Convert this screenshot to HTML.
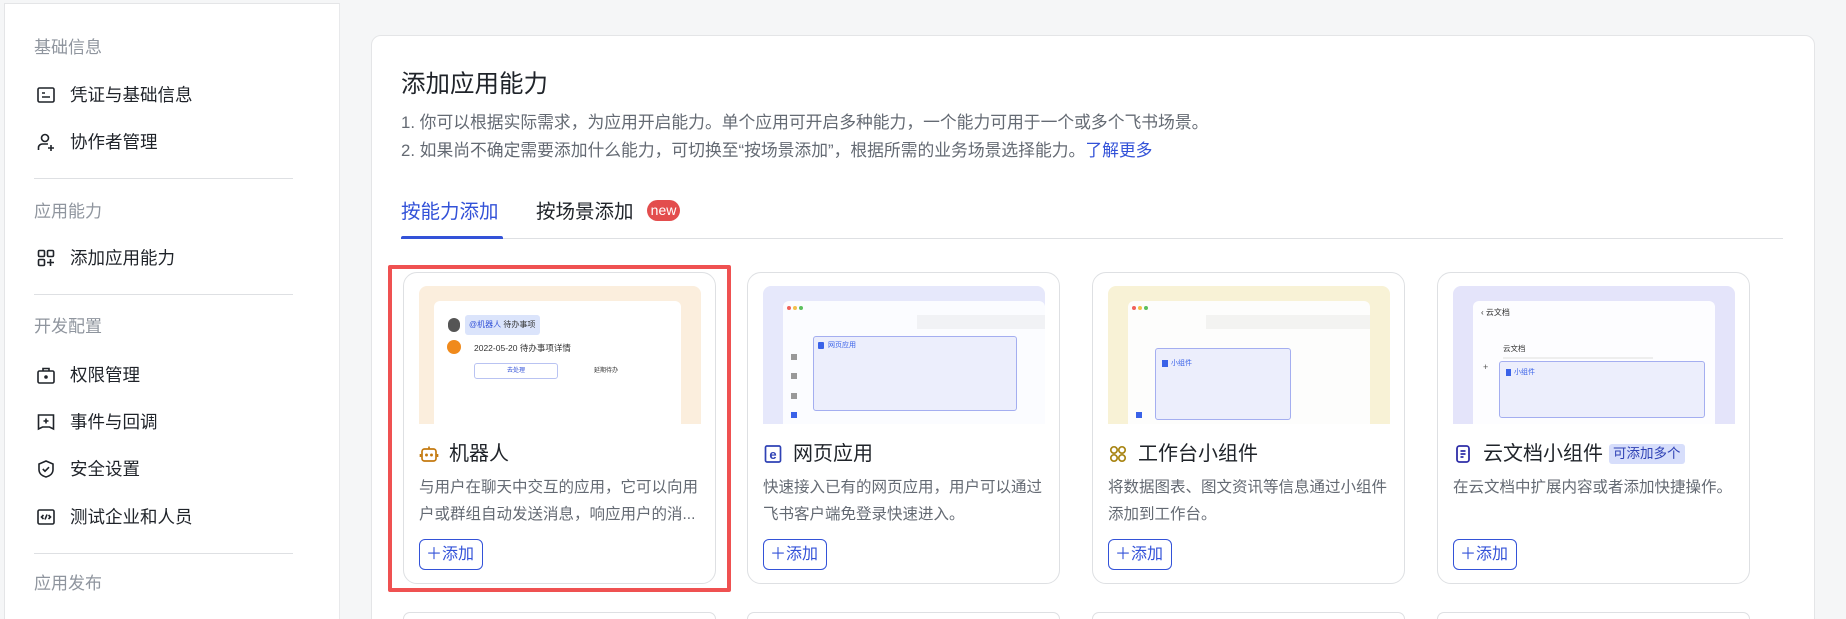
<!DOCTYPE html>
<html style="overflow:hidden;width:1846px;height:619px"><head><meta charset="utf-8">
<style>
*{box-sizing:border-box;margin:0;padding:0}
html,body{overflow:hidden}
body{width:1846px;height:619px;overflow:hidden;background:#f5f6f7;font-family:"Liberation Sans","Noto Sans CJK SC",sans-serif;position:relative;color:#1f2329}
.side{position:absolute;left:4px;top:3px;width:336px;height:616px;background:#fff;border-left:1px solid #e4e5e7;border-top:1px solid #e4e5e7;border-right:1px solid #e8e9eb}
.lab{position:absolute;left:29px;font-size:17px;color:#8f959e;line-height:20px}
.it{position:absolute;left:31px;font-size:17.5px;color:#1f2329;line-height:22px;display:flex;align-items:center}
.it svg{width:20px;height:20px;margin-right:14px}
.hr{position:absolute;left:29px;width:259px;height:1px;background:#dee0e3}
.main{position:absolute;left:371px;top:35px;width:1444px;height:600px;background:#fff;border:1px solid #e4e5e7;border-radius:10px}
.abs{position:absolute}
.card{position:absolute;top:272px;width:313px;height:312px;border:1px solid #dee0e3;border-radius:14px;background:#fff}
.img{position:absolute;left:15px;top:13px;width:282px;height:138px;border-radius:8px 8px 0 0;overflow:hidden}
.ct{position:absolute;left:15px;top:168px;font-size:20px;line-height:26px;display:flex;align-items:center;white-space:nowrap}
.ct svg{width:20px;height:20px;margin-right:10px}
.cd{position:absolute;left:15px;top:201px;width:285px;font-size:15.5px;line-height:27px;color:#646a73}
.btn{position:absolute;left:15px;top:266px;height:31px;border:1px solid #3352d8;border-radius:6px;color:#3352d8;font-size:16px;line-height:29px;padding:0 8px 0 6px;white-space:nowrap}
.win{position:absolute;background:#fff;border-radius:6px 6px 0 0}
</style></head><body>
<div class="side">
<div class="lab" style="top:34px">基础信息</div>
<div class="it" style="top:80px"><svg viewBox="0 0 20 20" fill="none" stroke="#1f2329" stroke-width="1.6"><rect x="2" y="3" width="16" height="14" rx="1.5"/><path d="M6 8h3M6 12h8"/></svg>凭证与基础信息</div>
<div class="it" style="top:127px"><svg viewBox="0 0 20 20" fill="none" stroke="#1f2329" stroke-width="1.6"><circle cx="9" cy="6" r="3.5"/><path d="M2.5 18v-2.5c0-2 1.8-3.5 4-3.5H12M15 13v6M12 16h6"/></svg>协作者管理</div>
<div class="hr" style="top:174px"></div>
<div class="lab" style="top:198px">应用能力</div>
<div class="it" style="top:243px"><svg viewBox="0 0 20 20" fill="none" stroke="#1f2329" stroke-width="1.6"><rect x="2.5" y="2.5" width="6" height="6" rx="1.2"/><rect x="11.5" y="2.5" width="6" height="6" rx="1.2"/><rect x="2.5" y="11.5" width="6" height="6" rx="1.2"/><path d="M14.5 11v7M11 14.5h7"/></svg>添加应用能力</div>
<div class="hr" style="top:290px"></div>
<div class="lab" style="top:313px">开发配置</div>
<div class="it" style="top:360px"><svg viewBox="0 0 20 20" fill="none" stroke="#1f2329" stroke-width="1.6"><rect x="2" y="6" width="16" height="12" rx="1.5"/><path d="M7 6V3.5h6V6"/><circle cx="10" cy="12" r="1" fill="#1f2329"/></svg>权限管理</div>
<div class="it" style="top:407px"><svg viewBox="0 0 20 20" fill="none" stroke="#1f2329" stroke-width="1.6"><path d="M2.5 3h15v14l-4-2h-7l-4 2z"/><path d="M10 6.5v5M7.5 9h5"/></svg>事件与回调</div>
<div class="it" style="top:454px"><svg viewBox="0 0 20 20" fill="none" stroke="#1f2329" stroke-width="1.6"><path d="M10 2l7 3v5.5c0 4-3.2 6.5-7 7.5-3.8-1-7-3.5-7-7.5V5z"/><path d="M6.8 10l2.2 2.2 4-4"/></svg>安全设置</div>
<div class="it" style="top:502px"><svg viewBox="0 0 20 20" fill="none" stroke="#1f2329" stroke-width="1.6"><rect x="2" y="3" width="16" height="14" rx="1.5"/><path d="M7.5 8L5.5 10l2 2M12.5 8l2 2-2 2M11 7.5l-2 5"/></svg>测试企业和人员</div>
<div class="hr" style="top:549px"></div>
<div class="lab" style="top:570px">应用发布</div>
</div>

<div class="main"></div>
<div class="abs" style="left:401px;top:70px;font-size:24.5px;line-height:30px;color:#1f2329">添加应用能力</div>
<div class="abs" style="left:401px;top:111px;font-size:16.8px;line-height:24px;color:#646a73;white-space:nowrap">1. 你可以根据实际需求，为应用开启能力。单个应用可开启多种能力，一个能力可用于一个或多个飞书场景。</div>
<div class="abs" style="left:401px;top:139px;font-size:16.8px;line-height:24px;color:#646a73;white-space:nowrap">2. 如果尚不确定需要添加什么能力，可切换至“按场景添加”，根据所需的业务场景选择能力。<span style="color:#3352d8">了解更多</span></div>
<div class="abs" style="left:401px;top:199px;font-size:19.5px;line-height:26px;color:#3352d8">按能力添加</div>
<div class="abs" style="left:536px;top:199px;font-size:19.5px;line-height:26px;color:#1f2329">按场景添加</div>
<div class="abs" style="left:647px;top:200px;width:33px;height:21px;border-radius:11px;background:#e34d4d;color:#fff;font-size:14px;line-height:21px;text-align:center">new</div>
<div class="abs" style="left:401px;top:238px;width:1382px;height:1px;background:#dee0e3"></div>
<div class="abs" style="left:401px;top:236px;width:102px;height:3px;background:#3352d8;border-radius:2px 2px 0 0"></div>

<div class="abs" style="left:388px;top:265px;width:343px;height:327px;border:4px solid #ef5151;border-radius:2px"></div>

<!-- card 1 -->
<div class="card" style="left:403px">
 <div class="img" style="background:#fbeedd">
  <div class="win" style="left:15px;top:15px;width:247px;height:123px">
   <div class="abs" style="left:14px;top:17px;width:12px;height:14px;border-radius:6px;background:#555"></div>
   <div class="abs" style="left:31px;top:14px;width:75px;height:20px;background:#dbe4fb;border-radius:3px;font-size:8px;line-height:20px;color:#3352d8;padding-left:4px">@机器人 <span style="color:#333">待办事项</span></div>
   <div class="abs" style="left:13px;top:39px;width:14px;height:14px;border-radius:7px;background:#f08a1c"></div>
   <div class="abs" style="left:40px;top:41px;font-size:8.5px;color:#333;white-space:nowrap">2022-05-20 待办事项详情</div>
   <div class="abs" style="left:40px;top:62px;width:84px;height:16px;border:1px solid #b9c3f2;border-radius:3px;font-size:6px;color:#3352d8;text-align:center;line-height:14px">去处理</div>
   <div class="abs" style="left:130px;top:62px;width:84px;height:16px;font-size:6px;color:#333;text-align:center;line-height:16px">延期待办</div>
  </div>
 </div>
 <div class="ct"><svg viewBox="0 0 20 20" fill="none" stroke="#c47a10" stroke-width="1.7"><rect x="3" y="5" width="14" height="12" rx="2.5"/><path d="M10 5V2.5M1.5 10v3M18.5 10v3"/><circle cx="7.5" cy="11" r=".6" fill="#c47a10"/><circle cx="12.5" cy="11" r=".6" fill="#c47a10"/></svg>机器人</div>
 <div class="cd">与用户在聊天中交互的应用，它可以向用户或群组自动发送消息，响应用户的消...</div>
 <div class="btn">＋添加</div>
</div>

<!-- card 2 -->
<div class="card" style="left:747px">
 <div class="img" style="background:#e6e8fb">
  <div class="win" style="left:20px;top:15px;width:262px;height:123px;background:#fbfcff">
   <div class="abs" style="left:4px;top:5px;width:4px;height:4px;border-radius:2px;background:#f0605a"></div>
   <div class="abs" style="left:10px;top:5px;width:4px;height:4px;border-radius:2px;background:#f3c04a"></div>
   <div class="abs" style="left:16px;top:5px;width:4px;height:4px;border-radius:2px;background:#5cc05d"></div>
   <div class="abs" style="left:134px;top:14px;width:128px;height:14px;background:#f1f2f5"></div>
   <div class="abs" style="left:8px;top:53px;width:6px;height:6px;background:#999"></div>
   <div class="abs" style="left:8px;top:72px;width:6px;height:6px;background:#999"></div>
   <div class="abs" style="left:8px;top:92px;width:6px;height:6px;background:#999"></div>
   <div class="abs" style="left:8px;top:111px;width:6px;height:6px;background:#3a62e8"></div>
   <div class="abs" style="left:30px;top:35px;width:204px;height:75px;border:1px solid #a4aef0;border-radius:3px;background:#eceefc">
    <div class="abs" style="left:4px;top:5px;width:6px;height:7px;background:#3a62e8;border-radius:1px"></div>
    <div class="abs" style="left:14px;top:3px;font-size:7px;color:#3a62e8">网页应用</div>
   </div>
  </div>
 </div>
 <div class="ct"><svg viewBox="0 0 20 20"><rect x="2.5" y="2" width="15" height="16" rx="1.5" fill="none" stroke="#2f42b5" stroke-width="1.7"/><text x="10" y="15" font-size="13" font-weight="bold" text-anchor="middle" fill="#2f42b5" font-family="Liberation Sans">e</text></svg>网页应用</div>
 <div class="cd">快速接入已有的网页应用，用户可以通过飞书客户端免登录快速进入。</div>
 <div class="btn">＋添加</div>
</div>

<!-- card 3 -->
<div class="card" style="left:1092px">
 <div class="img" style="background:#f8f2d6">
  <div class="win" style="left:20px;top:15px;width:242px;height:123px;background:#fdfdfc">
   <div class="abs" style="left:4px;top:5px;width:4px;height:4px;border-radius:2px;background:#f0605a"></div>
   <div class="abs" style="left:10px;top:5px;width:4px;height:4px;border-radius:2px;background:#f3c04a"></div>
   <div class="abs" style="left:16px;top:5px;width:4px;height:4px;border-radius:2px;background:#5cc05d"></div>
   <div class="abs" style="left:78px;top:14px;width:164px;height:14px;background:#f3f3f1"></div>
   <div class="abs" style="left:8px;top:111px;width:6px;height:6px;background:#3a62e8"></div>
   <div class="abs" style="left:27px;top:47px;width:136px;height:72px;border:1px solid #a4aef0;border-radius:3px;background:#eceefc">
    <div class="abs" style="left:6px;top:11px;width:6px;height:7px;background:#3a62e8"></div>
    <div class="abs" style="left:15px;top:9px;font-size:7px;color:#3a62e8">小组件</div>
   </div>
  </div>
 </div>
 <div class="ct"><svg viewBox="0 0 20 20" fill="none" stroke="#a88514" stroke-width="1.7"><circle cx="6" cy="6" r="3.2"/><circle cx="14" cy="6" r="3.2"/><circle cx="6" cy="14" r="3.2"/><circle cx="14" cy="14" r="3.2"/></svg>工作台小组件</div>
 <div class="cd">将数据图表、图文资讯等信息通过小组件添加到工作台。</div>
 <div class="btn">＋添加</div>
</div>

<!-- card 4 -->
<div class="card" style="left:1437px">
 <div class="img" style="background:#e4e4fa">
  <div class="win" style="left:20px;top:15px;width:242px;height:123px;background:#fdfdff">
   <div class="abs" style="left:8px;top:6px;font-size:8px;color:#333">‹ 云文档</div>
   <div class="abs" style="left:30px;top:42px;font-size:7.5px;color:#333">云文档</div>
   <div class="abs" style="left:30px;top:56px;width:150px;height:2px;background:#eee"></div>
   <div class="abs" style="left:10px;top:61px;font-size:9px;color:#555">+</div>
   <div class="abs" style="left:26px;top:60px;width:206px;height:57px;border:1px solid #a4aef0;border-radius:3px;background:#eceefc">
    <div class="abs" style="left:6px;top:7px;width:5px;height:7px;background:#3a62e8"></div>
    <div class="abs" style="left:14px;top:5px;font-size:7px;color:#3a62e8">小组件</div>
   </div>
  </div>
 </div>
 <div class="ct"><svg viewBox="0 0 20 20" fill="none" stroke="#2f2ea8" stroke-width="1.8"><rect x="4" y="2" width="12" height="16" rx="2.5"/><path d="M7.5 7h5M7.5 10h5M7.5 13h3"/></svg>云文档小组件<span style="margin-left:6px;background:#d7defb;color:#2f42b5;font-size:13.5px;line-height:20px;padding:0 4px;border-radius:3px">可添加多个</span></div>
 <div class="cd">在云文档中扩展内容或者添加快捷操作。</div>
 <div class="btn">＋添加</div>
</div>

<div class="card" style="left:403px;top:612px;height:7px;border-bottom:none;border-radius:14px 14px 0 0"></div>
<div class="card" style="left:747px;top:612px;height:7px;border-bottom:none;border-radius:14px 14px 0 0"></div>
<div class="card" style="left:1092px;top:612px;height:7px;border-bottom:none;border-radius:14px 14px 0 0"></div>
<div class="card" style="left:1437px;top:612px;height:7px;border-bottom:none;border-radius:14px 14px 0 0"></div>
</body></html>
